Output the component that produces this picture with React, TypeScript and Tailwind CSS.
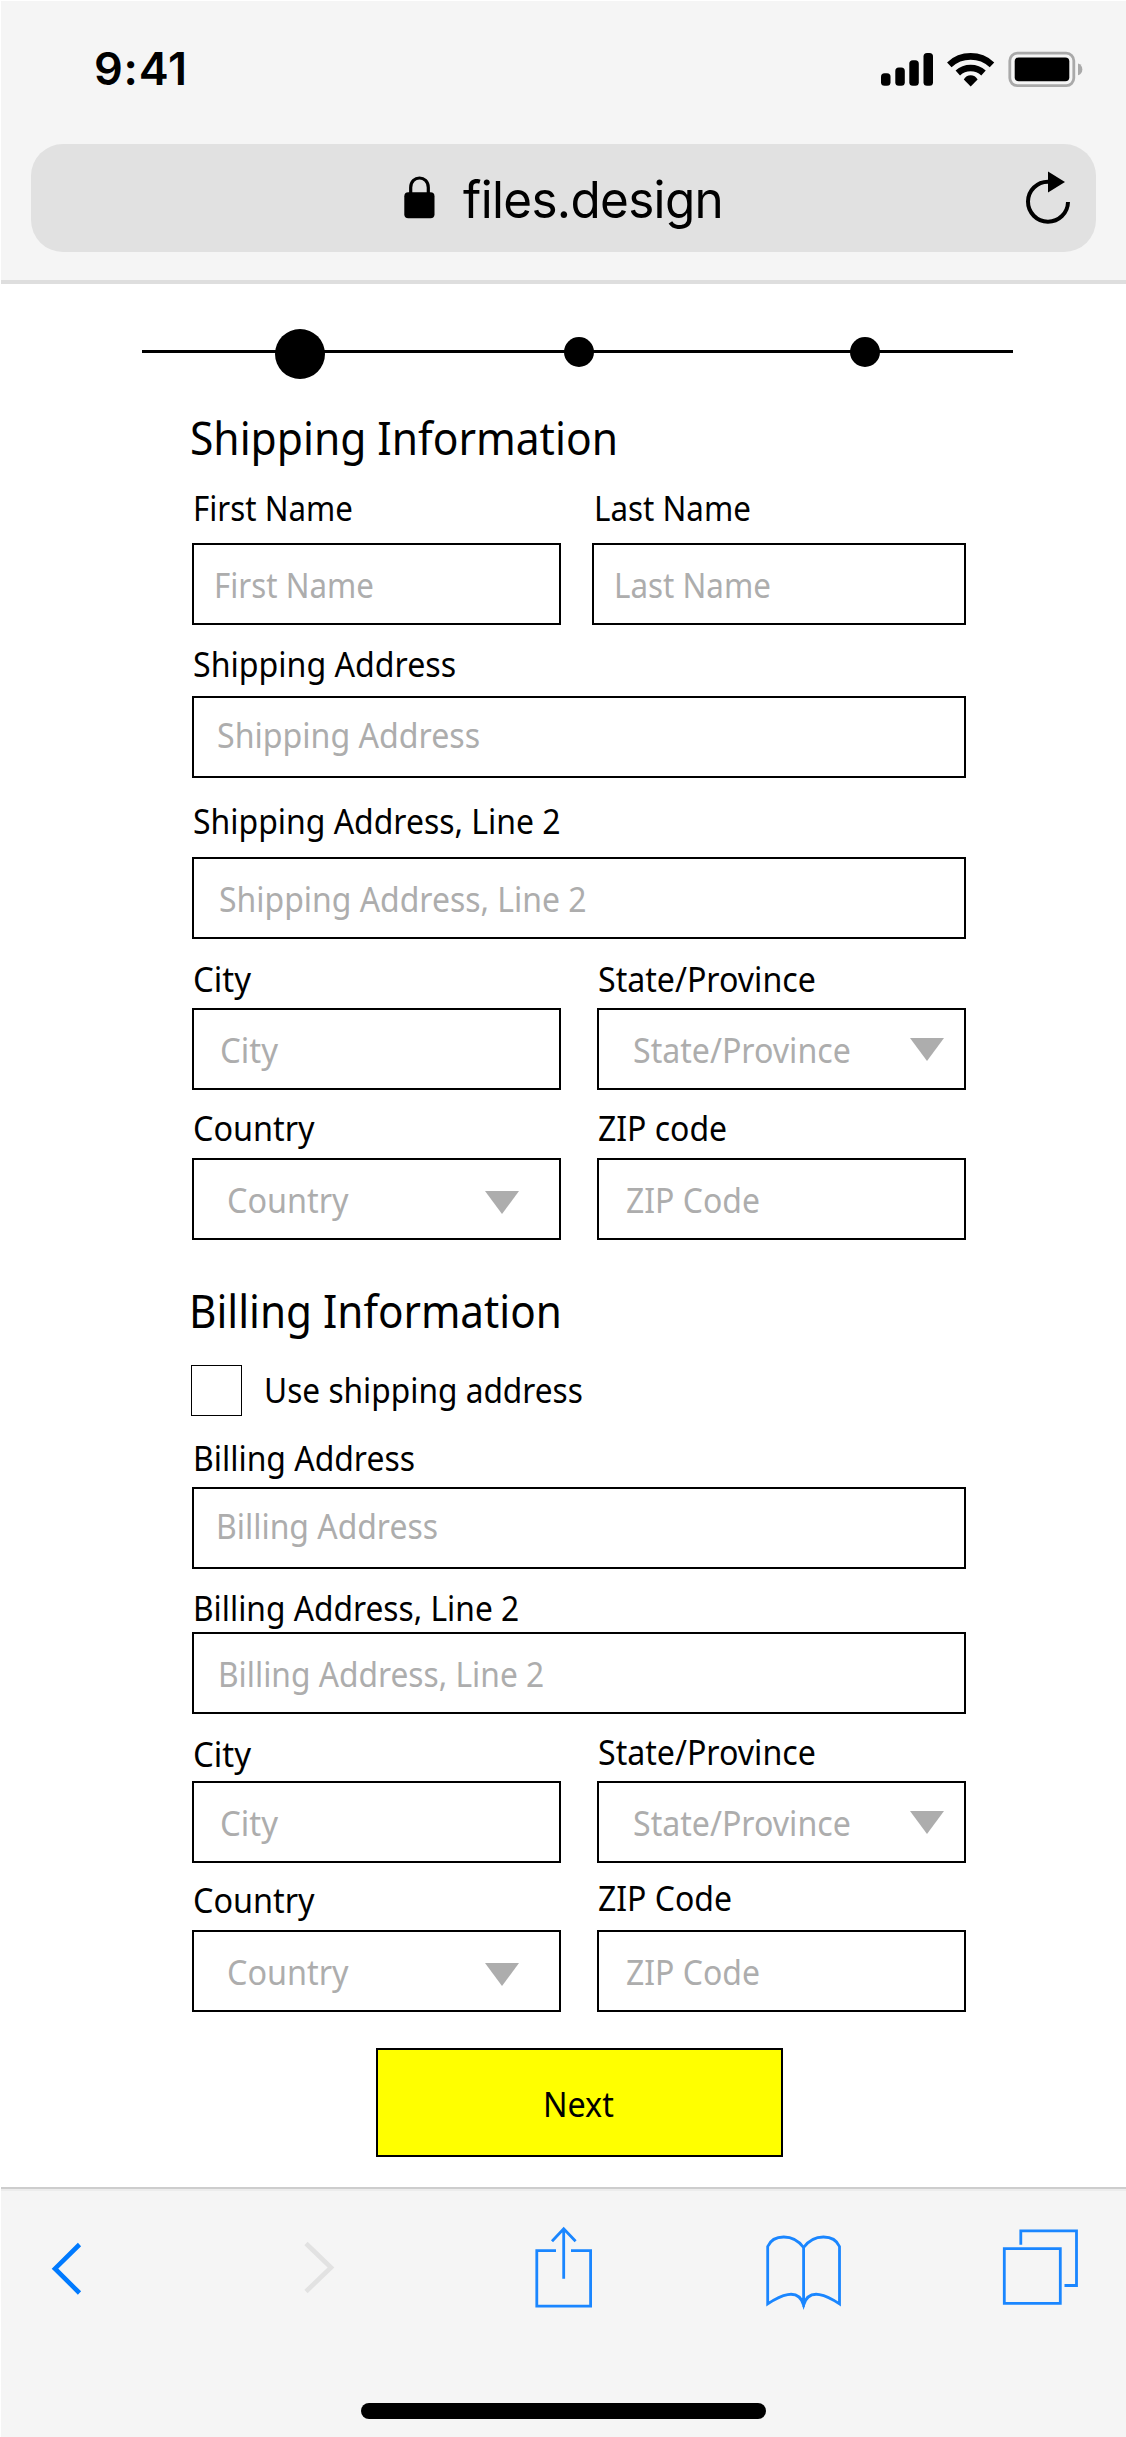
import type { ReactNode } from "react";

type FieldProps = {
  label: string;
  placeholder?: string;
  width: string;
  /** Horizontal fit of the label and placeholder text */
  fit: string;
  /** Space between the label and its box */
  gap: string;
  inset: string;
  arrow?: string;
  labelClass?: string;
};

function Text({ className, children }: { className: string; children: ReactNode }) {
  return (
    <span className={`block origin-left whitespace-nowrap text-[34px] leading-[40px] ${className}`}>
      {children}
    </span>
  );
}

function Field({ label, placeholder, width, fit, gap, inset, arrow, labelClass = "" }: FieldProps) {
  return (
    <div className={`flex flex-col ${width} ${gap}`}>
      <label className={`block pl-px ${labelClass}`}>
        <Text className={fit}>{label}</Text>
      </label>
      <div className={`flex h-[82px] items-start border-2 border-black text-[#adadad] ${inset}`}>
        <Text className={fit}>{placeholder ?? label}</Text>
        {arrow && (
          <svg className={`ml-auto shrink-0 ${arrow}`} width="34" height="23" viewBox="0 0 34 23">
            <path d="M0 0H34L17 23Z" fill="#adadad" />
          </svg>
        )}
      </div>
    </div>
  );
}

function StatusBar() {
  return (
    <div className="flex h-[143px] items-start">
      <span className="mt-[41px] ml-[93px] text-[45px] leading-[54px] font-semibold tracking-[0.8px]">9:41</span>
      <svg className="mt-[50px] mr-[43px] ml-auto" width="203" height="36" viewBox="0 0 203 36">
        <rect x="1" y="22.3" width="9.5" height="12.5" rx="3.5" />
        <rect x="15.3" y="16.6" width="9.5" height="18.2" rx="3.5" />
        <rect x="29.3" y="9.3" width="9.5" height="25.5" rx="3.5" />
        <rect x="43.5" y="2" width="9.5" height="32.8" rx="3.5" />
        <g fill="none" stroke="#000" strokeWidth="6.6">
          <path d="M69.3 13.8A31.4 31.4 0 0 1 112 13.8" />
          <path d="M77.8 22A19 19 0 0 1 103.5 22" />
        </g>
        <path d="M83.8 28.5C86.5 22.7 94.8 22.7 97.6 28.5L90.7 35.5Z" />
        <rect x="129.8" y="2.2" width="64" height="32.4" rx="7.5" fill="none" stroke="#a9a9a9" strokeWidth="2.8" />
        <rect x="134.7" y="6.5" width="54.6" height="23.8" rx="4" />
        <path d="M198 12.6C203.8 14 203.8 22.8 198 24.2Z" fill="#a9a9a9" />
      </svg>
    </div>
  );
}

function AddressBar() {
  return (
    <div className="ml-[30px] flex h-[108px] w-[1065px] items-start rounded-[32px] bg-[#e1e1e1]">
      <svg className="mt-[32px] ml-[373px]" width="31" height="43" viewBox="0 0 31 43">
        <path d="M6.7 18V11.5C6.7-1.2 24.3-1.2 24.3 11.5V18" fill="none" stroke="#000" strokeWidth="3.2" />
        <rect x="0.3" y="16.3" width="30.2" height="26" rx="4" />
      </svg>
      <span className="mt-[26px] ml-[28px] origin-left scale-x-[0.97] text-[51px] leading-[60px] tracking-[-0.7px]">
        files.design
      </span>
      <svg className="mt-[26px] mr-[24px] ml-auto" width="48" height="56" viewBox="0 0 48 56">
        <path d="M44 32A20 20 0 1 1 24 11.7" fill="none" stroke="#000" strokeWidth="4" />
        <path d="M24 1.5L41 12L24 22.5Z" />
      </svg>
    </div>
  );
}

function Stepper() {
  return (
    <div className="mt-[42px] ml-[142px] flex h-[51px] w-[871px] items-center">
      <div className="h-[3px] w-[134px] bg-black" />
      <div className="-mx-px mt-[4px] size-[50px] rounded-full bg-black" />
      <div className="h-[3px] w-[241px] bg-black" />
      <div className="-mx-px size-[30px] rounded-full bg-black" />
      <div className="h-[3px] w-[258px] bg-black" />
      <div className="-mx-px size-[30px] rounded-full bg-black" />
      <div className="h-[3px] flex-1 bg-black" />
    </div>
  );
}

function Toolbar() {
  return (
    <footer className="h-[250px] border-l border-white bg-[#f5f5f5]">
      <div className="h-[2px] bg-[#cdcdcd]" />
      <div className="h-[2px] bg-[#ececec]" />
      <div className="flex h-[212px] items-start">
        <svg className="mt-[49px] ml-[49px]" width="34" height="58" viewBox="0 0 34 58" fill="none" stroke="#007aff" strokeWidth="4.6">
          <path d="M29.5 4.5L5 28.7L29.5 53" />
        </svg>
        <svg className="mt-[49px] ml-[218px]" width="34" height="58" viewBox="0 0 34 58" fill="none" stroke="#e2e2e2" strokeWidth="4.6">
          <path d="M4 3.5L29 27.5L4 51.5" />
        </svg>
        <svg className="mt-[35px] ml-[198px]" width="60" height="84" viewBox="0 0 60 84" fill="none" stroke="#1a86ff" strokeWidth="2.8">
          <path d="M22 24.7H2.8V80.2H56.6V24.7H37M29.7 3V52.7M18 15.2L29.7 2.8L41.6 15.2" />
        </svg>
        <svg className="mt-[43px] ml-[171px]" width="78" height="86" viewBox="0 0 78 86" fill="none" stroke="#1a86ff" strokeWidth="2.8">
          <path d="M2.7 12.5C8 .3 28-1 38.6 13.5C49.2-1 69.2.3 74.5 12.5V69.8C63.5 62.5 44 52 38.6 71C33.2 52 13.7 62.5 2.7 69.8ZM38.6 13.5V72.8" />
        </svg>
        <svg className="mt-[36px] ml-[158px]" width="79" height="80" viewBox="0 0 79 80" fill="none" stroke="#1a86ff" strokeWidth="2.8">
          <path d="M3.3 21.7H59.3V76.3H3.3ZM19.8 17.7V3.9H75.5V58.5H63.5" />
        </svg>
      </div>
      <div className="ml-[360px] h-[16px] w-[405px] rounded-full bg-black" />
    </footer>
  );
}

export default function App() {
  return (
    <div className="h-[2437px] w-[1126px] overflow-hidden bg-white text-black font-[Inter,sans-serif]">
      <header className="h-[284px] border-t border-l border-white bg-[#f5f5f5]">
        <StatusBar />
        <AddressBar />
        <div className="mt-[28px] h-[4px] bg-[#dedede]" />
      </header>

      <main className="flow-root h-[1903px] font-['Noto_Sans',sans-serif]">
        <Stepper />
        <form className="ml-[192px] flex w-[774px] flex-col">
          <h2 className="mt-[34px] -ml-[2px] origin-left scale-x-[0.945] text-[45px] leading-[54px] whitespace-nowrap">
            Shipping Information
          </h2>
          <div className="mt-[23px] flex justify-between">
            <Field label="First Name" width="w-[369px]" gap="gap-[15px]" fit="scale-x-[0.92]" inset="pt-[20px] pl-[20px]" />
            <Field label="Last Name" width="w-[374px]" gap="gap-[15px]" fit="scale-x-[0.922]" inset="pt-[20px] pl-[20px]" labelClass="ml-px" />
          </div>
          <div className="mt-[19px]">
            <Field label="Shipping Address" width="w-full" gap="gap-[12px]" fit="scale-x-[0.945]" inset="pt-[17px] pl-[23px]" />
          </div>
          <div className="mt-[23px]">
            <Field label="Shipping Address, Line 2" width="w-full" gap="gap-[16px]" fit="scale-x-[0.939]" inset="pt-[20px] pl-[25px]" />
          </div>
          <div className="mt-[20px] flex justify-between">
            <Field label="City" width="w-[369px]" gap="gap-[9px]" fit="scale-x-[0.97]" inset="pt-[20px] pl-[26px]" />
            <Field label="State/Province" width="w-[369px]" gap="gap-[9px]" fit="scale-x-[0.945]" inset="pt-[20px] pl-[34px]" arrow="mt-[8px] mr-[20px]" />
          </div>
          <div className="mt-[18px] flex justify-between">
            <Field label="Country" width="w-[369px]" gap="gap-[10px]" fit="scale-x-[0.952]" inset="pt-[20px] pl-[33px]" arrow="mt-[11px] mr-[40px]" />
            <Field label="ZIP code" placeholder="ZIP Code" width="w-[369px]" gap="gap-[10px]" fit="scale-x-[0.94]" inset="pt-[20px] pl-[27px]" />
          </div>

          <h2 className="mt-[44px] -ml-[3px] origin-left scale-x-[0.938] text-[45px] leading-[54px] whitespace-nowrap">
            Billing Information
          </h2>
          <label className="mt-[27px] -ml-px flex h-[51px] items-start gap-[22px]">
            <span className="size-[51px] border border-black" />
            <Text className="mt-[5px] scale-x-[0.931]">Use shipping address</Text>
          </label>
          <div className="mt-[22px]">
            <Field label="Billing Address" width="w-full" gap="gap-[9px]" fit="scale-x-[0.938]" inset="pt-[17px] pl-[22px]" />
          </div>
          <div className="mt-[19px]">
            <Field label="Billing Address, Line 2" width="w-full" gap="gap-[4px]" fit="scale-x-[0.933]" inset="pt-[20px] pl-[24px]" />
          </div>
          <div className="mt-[20px] flex justify-between">
            <Field label="City" width="w-[369px]" gap="gap-[7px]" fit="scale-x-[0.97]" inset="pt-[20px] pl-[26px]" />
            <Field label="State/Province" width="w-[369px]" gap="gap-[7px]" fit="scale-x-[0.945]" inset="pt-[20px] pl-[34px]" arrow="mt-[8px] mr-[20px]" labelClass="-mt-[2px] pb-[2px]" />
          </div>
          <div className="mt-[17px] flex justify-between">
            <Field label="Country" width="w-[369px]" gap="gap-[10px]" fit="scale-x-[0.952]" inset="pt-[20px] pl-[33px]" arrow="mt-[11px] mr-[40px]" />
            <Field label="ZIP Code" width="w-[369px]" gap="gap-[10px]" fit="scale-x-[0.94]" inset="pt-[20px] pl-[27px]" labelClass="-mt-[2px] pb-[2px]" />
          </div>
          <button type="button" className="mt-[36px] ml-[184px] flex h-[109px] w-[407px] items-start border-2 border-black bg-[#ffff00] pt-[34px] pl-[165px]">
            <Text className="scale-x-[0.95]">Next</Text>
          </button>
        </form>
      </main>

      <Toolbar />
    </div>
  );
}
